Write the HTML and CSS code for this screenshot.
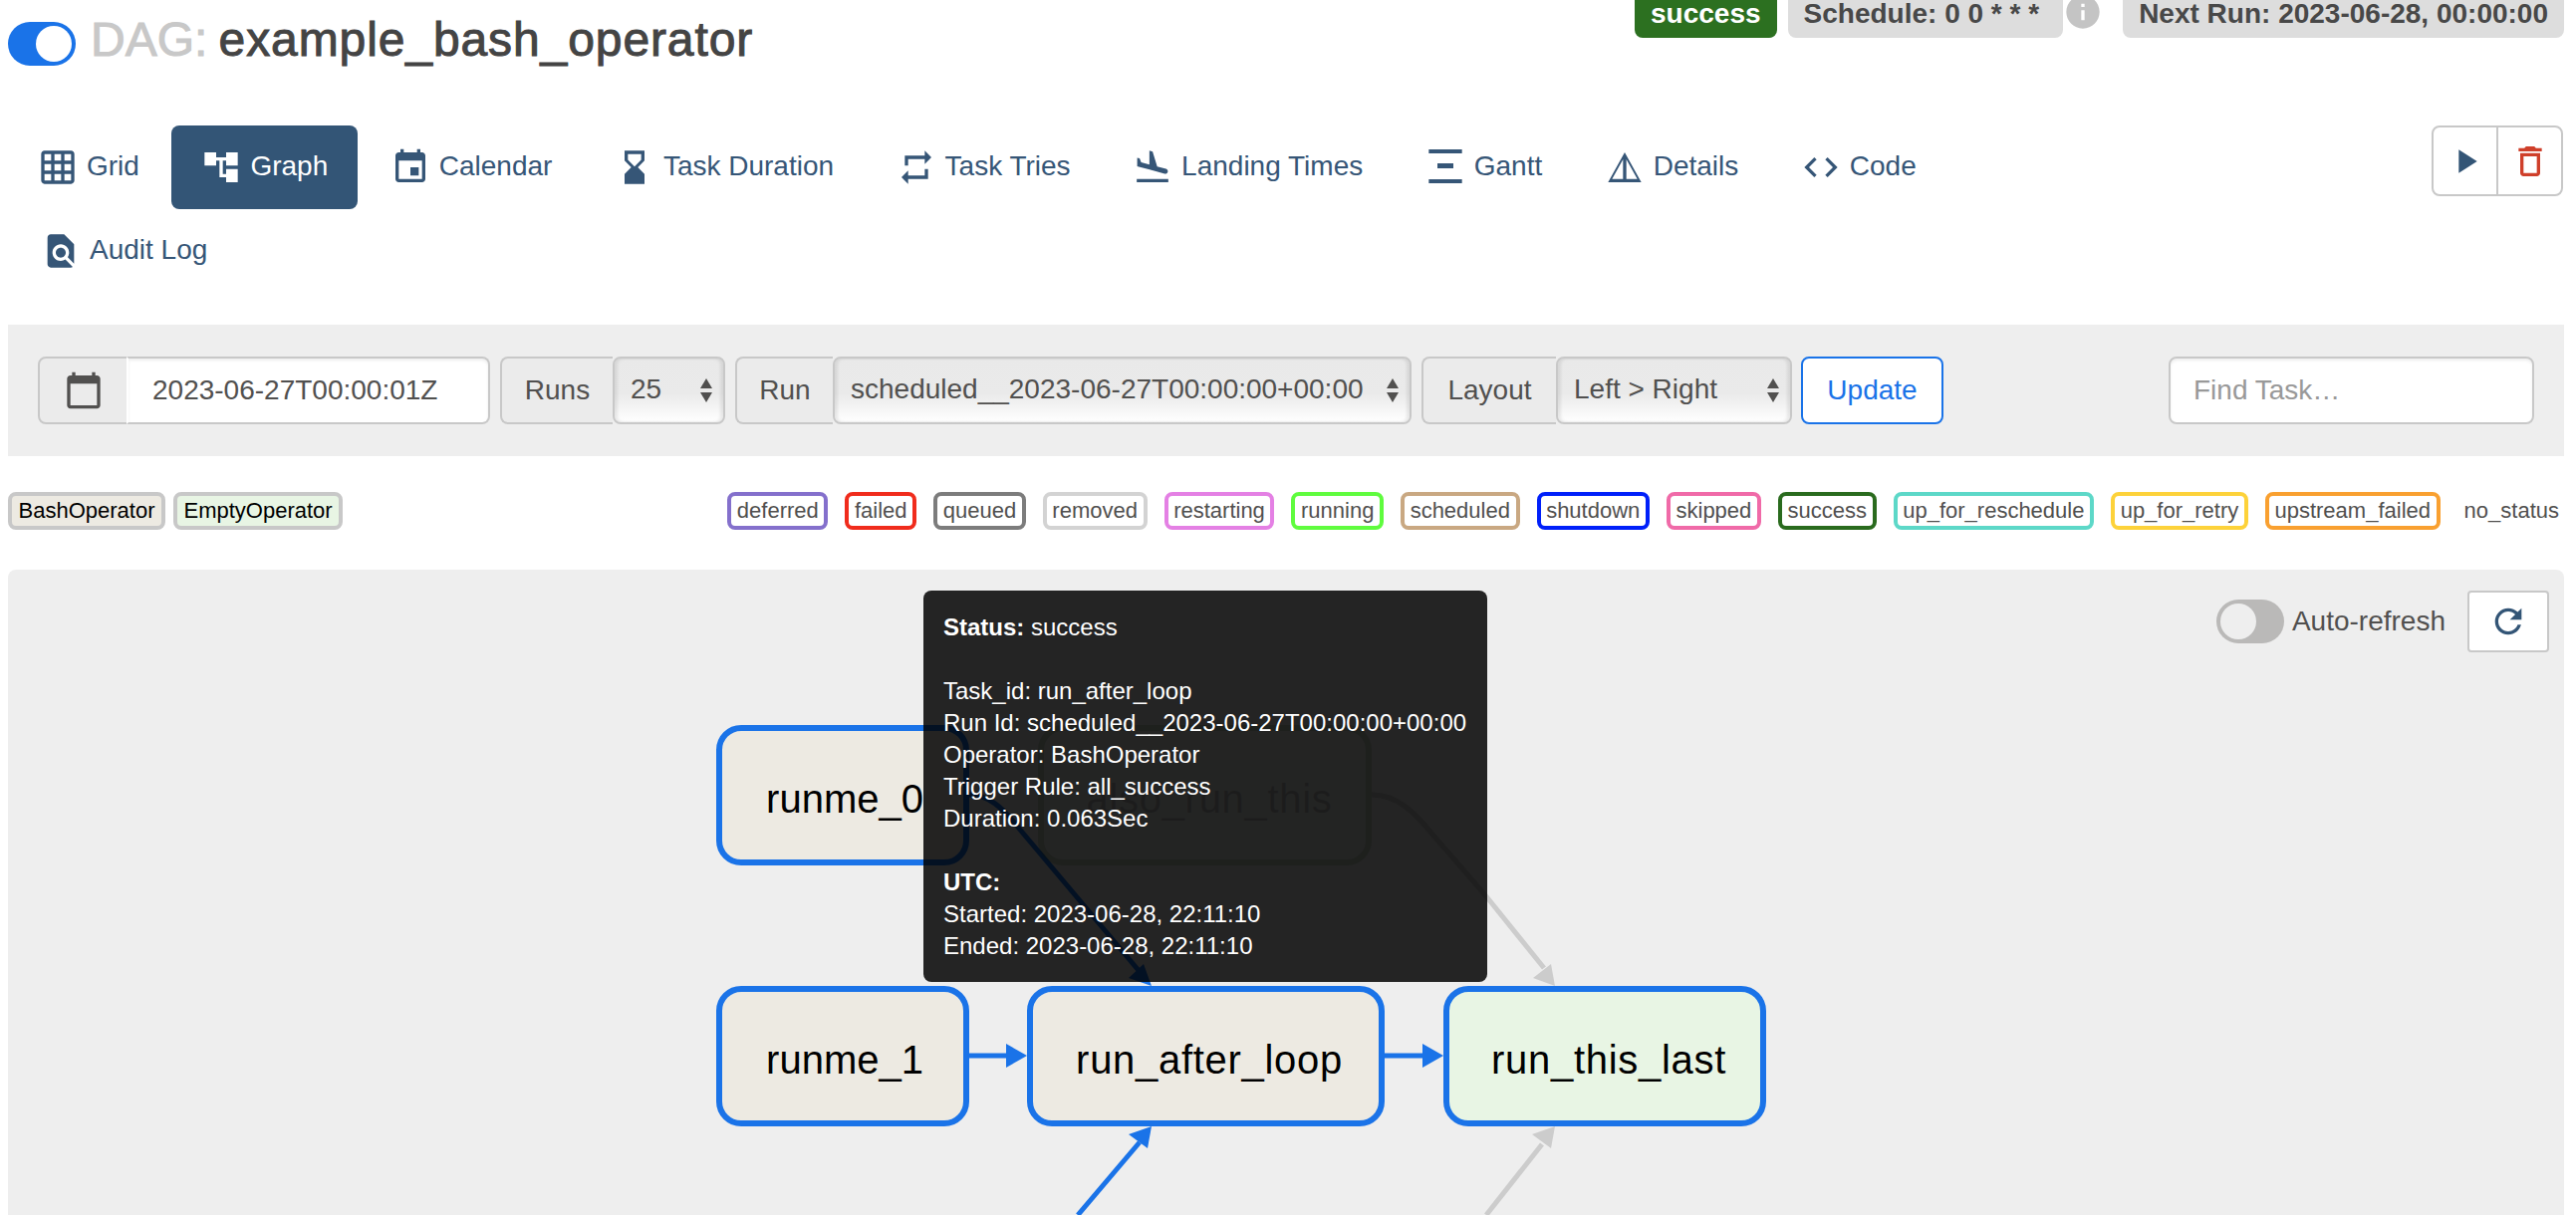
FILE: index.html
```html
<!DOCTYPE html>
<html lang="en">
<head>
    <meta charset="UTF-8">
    <title>DAG: example_bash_operator</title>
    <link rel="stylesheet" href="styles.css">
</head>
<body>

<header class="dag-header">
    <div class="dag-title">
        <span class="switch switch-on"></span>
        <h3><span class="dag-word">DAG:</span> example_bash_operator</h3>
    </div>
    <div class="dag-meta">
        <span class="badge badge-success">success</span>
        <span class="badge badge-schedule">Schedule: 0 0 * * *</span>
        <svg class="info-icon" viewBox="0 0 24 24"><path d="M12 2C6.48 2 2 6.48 2 12s4.48 10 10 10 10-4.48 10-10S17.52 2 12 2zm1 15h-2v-6h2v6zm0-8h-2V7h2v2z"/></svg>
        <span class="badge">Next Run: 2023-06-28, 00:00:00</span>
    </div>
</header>

<div class="nav-row">
    <ul class="nav-pills">
        <li><a href="#"><svg viewBox="0 0 24 24"><path d="M20 2H4c-1.1 0-2 .9-2 2v16c0 1.1.9 2 2 2h16c1.1 0 2-.9 2-2V4c0-1.1-.9-2-2-2zM8 20H4v-4h4v4zm0-6H4v-4h4v4zm0-6H4V4h4v4zm6 12h-4v-4h4v4zm0-6h-4v-4h4v4zm0-6h-4V4h4v4zm6 12h-4v-4h4v4zm0-6h-4v-4h4v4zm0-6h-4V4h4v4z"/></svg>Grid</a></li>
        <li class="active"><a href="#"><svg viewBox="0 0 24 24"><path d="M22 11V3h-7v3H9V3H2v8h7V8h2v10h4v3h7v-8h-7v3h-2V8h2v3z"/></svg>Graph</a></li>
        <li><a href="#"><svg viewBox="0 0 24 24"><path d="M17 12h-5v5h5v-5zM16 1v2H8V1H6v2H5c-1.11 0-1.99.9-1.99 2L3 19c0 1.1.89 2 2 2h14c1.1 0 2-.9 2-2V5c0-1.1-.9-2-2-2h-1V1h-2zm3 18H5V8h14v11z"/></svg>Calendar</a></li>
        <li><a href="#"><svg viewBox="0 0 24 24"><path d="M18 22l-.01-6L14 12l3.99-4.01L18 2H6v6l4 4-4 3.99V22h12zM8 7.5V4h8v3.5l-4 4-4-4z"/></svg>Task Duration</a></li>
        <li><a href="#"><svg viewBox="0 0 24 24"><path d="M7 7h10v3l4-4-4-4v3H5v6h2V7zm10 10H7v-3l-4 4 4 4v-3h12v-6h-2v4z"/></svg>Task Tries</a></li>
        <li><a href="#"><svg viewBox="0 0 24 24"><path d="M2.5 19h19v2h-19v-2zm7.18-5.73l4.35 1.16 5.31 1.42c.8.21 1.62-.26 1.84-1.06.21-.8-.26-1.62-1.06-1.84l-5.31-1.42-2.76-9.02L10.12 2v8.28L5.15 8.95l-.93-2.32-1.45-.39v5.17l1.6.43 5.31 1.43z"/></svg>Landing Times</a></li>
        <li><a href="#"><svg viewBox="0 0 24 24"><path d="M2 1.2h20v2.4H2zM7.2 9.6h9.6v3H7.2zM2 19.2h20v2.4H2z"/></svg>Gantt</a></li>
        <li><a href="#"><svg viewBox="0 0 24 24"><path d="M12 3L2 21h20L12 3zm1 4.14L19.6 19H13V7.14zm-2 0V19H4.4L11 7.14z"/></svg>Details</a></li>
        <li><a href="#"><svg viewBox="0 0 24 24"><path d="M9.4 16.6L4.8 12l4.6-4.6L8 6l-6 6 6 6 1.4-1.4zm5.2 0l4.6-4.6-4.6-4.6L16 6l6 6-6 6-1.4-1.4z"/></svg>Code</a></li>
        <li class="audit"><a href="#"><svg viewBox="0 0 24 24"><path d="M20 19.59V8l-6-6H6c-1.1 0-1.99.9-1.99 2L4 20c0 1.1.89 2 1.99 2H18c.45 0 .85-.15 1.19-.4l-4.43-4.43c-.8.52-1.74.83-2.76.83-2.76 0-5-2.24-5-5s2.24-5 5-5 5 2.24 5 5c0 1.02-.31 1.96-.83 2.75L20 19.59zM9 13c0 1.66 1.34 3 3 3s3-1.34 3-3-1.34-3-3-3-3 1.34-3 3z"/></svg>Audit Log</a></li>
    </ul>
    <div class="action-group">
        <button class="action-btn action-play"><svg viewBox="0 0 24 24"><path d="M8 5v14l11-7z"/></svg></button>
        <button class="action-btn action-delete"><svg viewBox="0 0 24 24"><path d="M6 19c0 1.1.9 2 2 2h8c1.1 0 2-.9 2-2V7H6v12zM8 9h8v10H8V9zm7.5-5l-1-1h-5l-1 1H5v2h14V4h-3.5z"/></svg></button>
    </div>
</div>

<form class="filter-bar">
    <div class="input-group">
        <span class="addon addon-icon"><svg viewBox="0 0 24 24"><path d="M20 3h-1V1h-2v2H7V1H5v2H4c-1.1 0-2 .9-2 2v16c0 1.1.9 2 2 2h16c1.1 0 2-.9 2-2V5c0-1.1-.9-2-2-2zm0 18H4V8h16v13z"/></svg></span>
        <input class="date-input" type="text" value="2023-06-27T00:00:01Z">
    </div>
    <div class="input-group">
        <span class="addon addon-runs">Runs</span>
        <div class="select-box select-runs"><select><option>25</option></select></div>
    </div>
    <div class="input-group">
        <span class="addon addon-run">Run</span>
        <div class="select-box select-run"><select><option>scheduled__2023-06-27T00:00:00+00:00</option></select></div>
    </div>
    <div class="input-group">
        <span class="addon addon-layout">Layout</span>
        <div class="select-box select-layout"><select><option>Left &gt; Right</option></select></div>
    </div>
    <button class="update-btn" type="button">Update</button>
    <input class="find-task" type="text" placeholder="Find Task…">
</form>

<div class="legend">
    <div class="legend-group operators">
        <span class="op op-bash">BashOperator</span>
        <span class="op op-empty">EmptyOperator</span>
    </div>
    <div class="legend-group states">
        <span class="state st-deferred">deferred</span>
        <span class="state st-failed">failed</span>
        <span class="state st-queued">queued</span>
        <span class="state st-removed">removed</span>
        <span class="state st-restarting">restarting</span>
        <span class="state st-running">running</span>
        <span class="state st-scheduled">scheduled</span>
        <span class="state st-shutdown">shutdown</span>
        <span class="state st-skipped">skipped</span>
        <span class="state st-success">success</span>
        <span class="state st-reschedule">up_for_reschedule</span>
        <span class="state st-retry">up_for_retry</span>
        <span class="state st-upstream">upstream_failed</span>
        <span class="state st-none">no_status</span>
    </div>
</div>

<section class="graph-panel">
    <!-- coordinates in the viewBox are page pixels -->
    <svg class="graph-canvas" viewBox="8 572 2566 648">
        <g class="edge edge-grey">
            <path d="M1377 798C1402 798 1420 815 1440 840L1492 900L1550 972"/>
            <polygon points="1561,990 1557,968 1539,982"/>
            <path d="M1492 1220L1548 1149"/>
            <polygon points="1561,1131 1538,1139 1557,1153"/>
        </g>
        <g class="edge edge-blue">
            <path d="M973 798C992 798 1006 810 1024 833L1146 978"/>
            <polygon points="1156,990 1148,968 1133,982"/>
            <path d="M973 1060H1014"/>
            <polygon points="1031,1060 1010,1048 1010,1072"/>
            <path d="M1390 1060H1432"/>
            <polygon points="1449,1060 1428,1048 1428,1072"/>
            <path d="M1082 1220L1144 1147"/>
            <polygon points="1156,1131 1133,1139 1152,1153"/>
        </g>
        <g class="node">
            <rect x="722" y="731" width="248" height="135" rx="22"/>
            <text x="848" y="816">runme_0</text>
        </g>
        <g class="node node-dim">
            <rect x="1045" y="731" width="329" height="135" rx="22"/>
            <text class="label-wide" x="1214" y="816">also_run_this</text>
        </g>
        <g class="node">
            <rect x="722" y="993" width="248" height="135" rx="22"/>
            <text x="848" y="1078">runme_1</text>
        </g>
        <g class="node">
            <rect x="1034" y="993" width="353" height="135" rx="22"/>
            <text class="label-wide" x="1214" y="1078">run_after_loop</text>
        </g>
        <g class="node node-empty">
            <rect x="1452" y="993" width="318" height="135" rx="22"/>
            <text class="label-wide" x="1615" y="1078">run_this_last</text>
        </g>
    </svg>

    <div class="graph-tools">
        <span class="switch switch-off"></span>
        <span class="auto-label">Auto-refresh</span>
        <button class="refresh-btn"><svg viewBox="0 0 24 24"><path d="M17.65 6.35C16.2 4.9 14.21 4 12 4c-4.42 0-7.99 3.58-7.99 8s3.57 8 7.99 8c3.73 0 6.84-2.55 7.73-6h-2.08c-.82 2.33-3.04 4-5.65 4-3.31 0-6-2.69-6-6s2.69-6 6-6c1.66 0 3.14.69 4.22 1.78L13 11h7V4l-2.35 2.35z"/></svg></button>
    </div>

    <div class="tooltip">
        <b>Status:</b> success<br><br>
        Task_id: run_after_loop<br>
        Run Id: scheduled__2023-06-27T00:00:00+00:00<br>
        Operator: BashOperator<br>
        Trigger Rule: all_success<br>
        Duration: 0.063Sec<br><br>
        <b>UTC:</b><br>
        Started: 2023-06-28, 22:11:10<br>
        Ended: 2023-06-28, 22:11:10
    </div>
</section>

</body>
</html>
```

FILE: styles.css
```css
* {
    box-sizing: border-box;
}

html, body {
    height: 1220px;
    overflow: hidden;
}

body {
    margin: 0;
    padding: 0 12px 0 8px;
    font-family: "Liberation Sans", Arial, sans-serif;
    font-size: 28px;
    color: #51504f;
    background-color: white;
}

/* header */
.dag-header {
    display: flex;
    justify-content: space-between;
    align-items: flex-start;
    height: 126px;
}

.dag-title {
    display: flex;
    align-items: flex-start;
    gap: 15px;
    margin-top: 22px;
}

.dag-title h3 {
    margin: -9px 0 0;
    font-size: 48px;
    line-height: 54px;
    font-weight: 400;
    letter-spacing: 0.9px;
    color: #444444;
    -webkit-text-stroke: 1px #444444;
    white-space: nowrap;
}

.dag-word {
    letter-spacing: 0;
    margin-right: -3px;
    color: #c8c8c8;
    -webkit-text-stroke: 1px #c8c8c8;
}

.dag-meta {
    display: flex;
    align-items: flex-start;
}

.badge {
    display: block;
    height: 50px;
    margin-top: -12px;
    padding: 10px 16px 0;
    margin-left: 11px;
    border-radius: 8px;
    font-size: 28px;
    line-height: 32px;
    font-weight: 700;
    color: #484848;
    background-color: #dddddd;
    white-space: nowrap;
}

.badge-success {
    color: white;
    background-color: #2c7020;
}

.badge-schedule {
    padding-right: 24px;
}

.info-icon {
    width: 40px;
    height: 40px;
    margin: -8px 20px 0 0;
    fill: #c4c4c4;
}

.badge + .info-icon + .badge {
    margin-left: 0;
}

/* switches */
.switch {
    display: block;
    flex: none;
    position: relative;
    width: 68px;
    height: 44px;
    border-radius: 22px;
}

.switch::after {
    content: "";
    position: absolute;
    top: 4px;
    width: 36px;
    height: 36px;
    border-radius: 50%;
}

.switch-on {
    background-color: #1a73e8;
}

.switch-on::after {
    right: 4px;
    background-color: white;
}

.switch-off {
    background-color: #bab9b8;
}

.switch-off::after {
    left: 4px;
    background-color: #eeeeee;
}

/* nav */
.nav-row {
    display: flex;
    justify-content: space-between;
    align-items: flex-start;
    height: 200px;
}

.nav-pills {
    display: flex;
    flex-wrap: wrap;
    width: 2000px;
    margin: 0;
    padding: 0;
    list-style: none;
}

.nav-pills li {
    margin-right: 2.5px;
}

.nav-pills a {
    display: flex;
    align-items: center;
    gap: 9px;
    height: 84px;
    padding: 0 30px 2px;
    border-radius: 8px;
    color: #365677;
    text-decoration: none;
    white-space: nowrap;
}

.nav-pills svg {
    width: 40px;
    height: 40px;
    margin-top: 2px;
    fill: #365677;
}

.nav-pills .active a {
    color: white;
    background-color: #335576;
}

.nav-pills .active svg {
    fill: white;
}

.nav-pills .audit {
    margin-left: 3px;
}

.action-group {
    display: flex;
    height: 71px;
    margin-right: 1px;
}

.action-btn {
    display: flex;
    align-items: center;
    justify-content: center;
    width: 67px;
    padding: 0;
    background-color: white;
    border: 2px solid #c8c8c8;
}

.action-btn svg {
    width: 40px;
    height: 40px;
}

.action-play {
    border-radius: 8px 0 0 8px;
}

.action-play svg {
    fill: #335576;
}

.action-delete {
    margin-left: -2px;
    border-radius: 0 8px 8px 0;
}

.action-delete svg {
    fill: #cf3f2a;
}

/* filter bar */
.filter-bar {
    display: flex;
    align-items: center;
    gap: 10px;
    height: 132px;
    padding: 0 30px 0 30px;
    background-color: #eeeeee;
}

.input-group {
    display: flex;
    height: 68px;
}

.addon {
    display: flex;
    align-items: center;
    justify-content: center;
    background-color: #ebebeb;
    border: 2px solid #c8c8c8;
    border-right: none;
    border-radius: 8px 0 0 8px;
}

.addon-icon {
    width: 91px;
    border-right: 2px solid #c8c8c8;
}

.addon-icon svg {
    width: 40px;
    height: 40px;
    fill: #51504f;
}

.addon-runs {
    width: 113px;
}

.addon-run {
    width: 98px;
}

.addon-layout {
    width: 135px;
}

.date-input {
    width: 365px;
    height: 68px;
    padding: 0 24px;
    margin-left: -2px;
    font: inherit;
    color: inherit;
    background-color: white;
    border: 2px solid #c8c8c8;
    border-left-color: transparent;
    border-radius: 0 8px 8px 0;
    box-shadow: inset 0 2px 3px rgba(0, 0, 0, 0.07);
}

.select-box {
    position: relative;
    height: 68px;
    border: 2px solid #c8c8c8;
    border-radius: 8px;
    background: linear-gradient(#e9e9e9, #eaeaea 55%, #ffffff);
    box-shadow: inset 3px 0 3px rgba(0, 0, 0, 0.08), inset -3px 0 3px rgba(0, 0, 0, 0.08);
}

/* the two little arrows of a mac select */
.select-box::before,
.select-box::after {
    content: "";
    position: absolute;
    right: 11px;
    border-left: 6.5px solid transparent;
    border-right: 6.5px solid transparent;
}

.select-box::before {
    top: 20px;
    border-bottom: 10px solid #51504f;
}

.select-box::after {
    top: 34px;
    border-top: 10px solid #51504f;
}

.select-box select {
    appearance: none;
    width: 100%;
    height: 100%;
    padding: 0 0 4px 16px;
    font: inherit;
    color: inherit;
    background: transparent;
    border: none;
    outline: none;
}

.select-runs {
    width: 113px;
}

.select-run {
    width: 581px;
}

.select-layout {
    width: 237px;
}

.update-btn {
    width: 143px;
    height: 68px;
    margin-left: -1px;
    padding: 0;
    font: inherit;
    color: #1a73e8;
    background-color: white;
    border: 2px solid #1a73e8;
    border-radius: 8px;
}

.find-task {
    width: 367px;
    height: 68px;
    margin-left: auto;
    padding: 0 23px;
    font: inherit;
    color: inherit;
    background-color: white;
    border: 2px solid #c8c8c8;
    border-radius: 8px;
    box-shadow: inset 0 2px 3px rgba(0, 0, 0, 0.07);
}

.find-task::placeholder {
    color: #999999;
    opacity: 1;
}

/* legend */
.legend {
    display: flex;
    justify-content: space-between;
    margin: 36px 0 40px;
    font-size: 22px;
}

.legend-group {
    display: flex;
}

.operators {
    gap: 8px;
}

.states {
    gap: 17px;
    margin-right: 1px;
}

.op, .state {
    display: flex;
    align-items: center;
    height: 38px;
    padding: 0 5.6px;
    border: 4px solid #c8c8c8;
    border-radius: 8px;
    white-space: nowrap;
}

.op {
    color: black;
    padding: 0 6.5px;
}

.op-bash {
    background-color: #edeae2;
}

.op-empty {
    background-color: #e8f5e4;
}

.st-deferred { border-color: #8470cc; }
.st-failed { border-color: #f02c1c; }
.st-queued { border-color: #7c7c7c; }
.st-removed { border-color: #d3d3d3; }
.st-restarting { border-color: #e480e4; }
.st-running { border-color: #5ffc3e; }
.st-scheduled { border-color: #c9a882; }
.st-shutdown { border-color: #0020fa; }
.st-skipped { border-color: #f06aa8; }
.st-success { border-color: #2a6b1e; }
.st-reschedule { border-color: #5dd8c8; }
.st-retry { border-color: #fdd23a; }
.st-upstream { border-color: #f9a030; }
.st-none { border-color: transparent; padding: 0 0 0 3px; }

/* graph */
.graph-panel {
    position: relative;
    height: 648px;
    background-color: #eeeeee;
    border-radius: 8px 8px 0 0;
    overflow: hidden;
}

.graph-canvas {
    position: absolute;
    top: 0;
    left: 0;
    width: 2566px;
    height: 648px;
}

.edge path {
    fill: none;
    stroke-width: 5;
}

.edge-grey path { stroke: #cccccc; }
.edge-grey polygon { fill: #cccccc; }
.edge-blue path { stroke: #1a73e8; }
.edge-blue polygon { fill: #1a73e8; }

.node rect {
    fill: #edeae2;
    stroke: #1a73e8;
    stroke-width: 6;
}

.node text {
    font-size: 40px;
    fill: black;
    text-anchor: middle;
}

.node .label-wide {
    letter-spacing: 0.7px;
}

.node-empty rect {
    fill: #e8f5e4;
}

.node-dim {
    opacity: 0.2;
}

.node-dim rect {
    fill: #e8f5e4;
    stroke: #2a6b1e;
}

.graph-tools {
    position: relative;
    display: flex;
    align-items: center;
    justify-content: flex-end;
    padding: 21px 15px 0 0;
}

.auto-label {
    margin: 0 22px 0 8px;
    color: #51504f;
}

.refresh-btn {
    display: flex;
    align-items: center;
    justify-content: center;
    width: 82px;
    height: 62px;
    padding: 0;
    background-color: white;
    border: 2px solid #c8c8c8;
    border-radius: 4px;
}

.refresh-btn svg {
    width: 40px;
    height: 40px;
    fill: #335576;
}

.tooltip {
    position: absolute;
    top: 21px;
    left: 919px;
    width: 566px;
    height: 393px;
    padding: 21px 20px;
    font-size: 24px;
    line-height: 32px;
    color: white;
    background-color: rgba(0, 0, 0, 0.85);
    border-radius: 8px;
    white-space: nowrap;
}
```
